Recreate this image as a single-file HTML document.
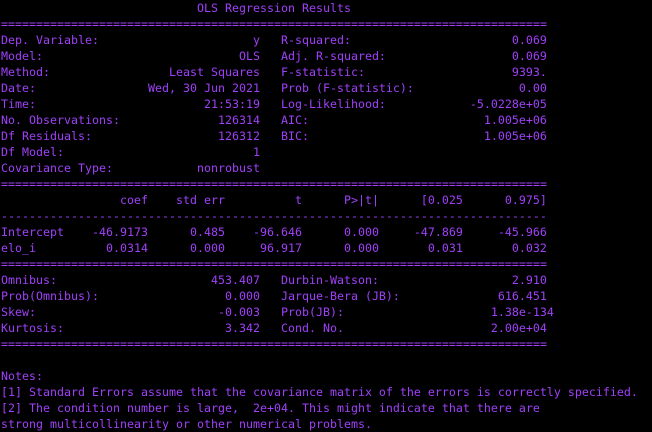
<!DOCTYPE html>
<html><head><meta charset="utf-8"><style>
html,body{margin:0;padding:0;background:#000;width:652px;height:432px;overflow:hidden}
pre{margin:0;position:absolute;left:1px;top:0;font-family:"DejaVu Sans Mono","Liberation Mono",monospace;font-size:11.63px;line-height:16px;color:#a040fa;white-space:pre}
</style></head><body><pre>                            OLS Regression Results                            
==============================================================================
Dep. Variable:                      y   R-squared:                       0.069
Model:                            OLS   Adj. R-squared:                  0.069
Method:                 Least Squares   F-statistic:                     9393.
Date:                Wed, 30 Jun 2021   Prob (F-statistic):               0.00
Time:                        21:53:19   Log-Likelihood:            -5.0228e+05
No. Observations:              126314   AIC:                         1.005e+06
Df Residuals:                  126312   BIC:                         1.005e+06
Df Model:                           1                                         
Covariance Type:            nonrobust                                         
==============================================================================
                 coef    std err          t      P&gt;|t|      [0.025      0.975]
------------------------------------------------------------------------------
Intercept    -46.9173      0.485    -96.646      0.000     -47.869     -45.966
elo_i          0.0314      0.000     96.917      0.000       0.031       0.032
==============================================================================
Omnibus:                      453.407   Durbin-Watson:                   2.910
Prob(Omnibus):                  0.000   Jarque-Bera (JB):              616.451
Skew:                          -0.003   Prob(JB):                     1.38e-134
Kurtosis:                       3.342   Cond. No.                     2.00e+04
==============================================================================

Notes:
[1] Standard Errors assume that the covariance matrix of the errors is correctly specified.
[2] The condition number is large,  2e+04. This might indicate that there are
strong multicollinearity or other numerical problems.</pre></body></html>
